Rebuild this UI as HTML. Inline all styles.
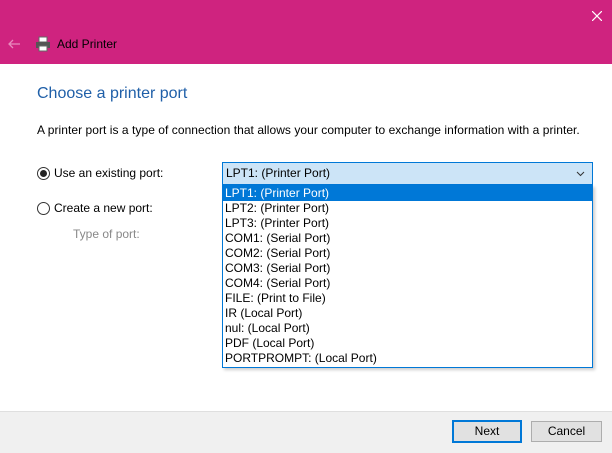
<!DOCTYPE html>
<html><head><style>
body{margin:0;width:612px;height:452px;overflow:hidden;background:#fff;font-family:"Liberation Sans",sans-serif;font-size:12px;color:#000;position:relative}
.a{position:absolute;white-space:nowrap}
.hdr{position:absolute;left:0;top:0;width:612px;height:64px;background:#cf237f}
.radio{position:absolute;width:11px;height:11px;border:1px solid #333;border-radius:50%;background:#fff}
.item{height:15px;line-height:15px;padding-left:2px}
.btn{position:absolute;top:421px;height:19px;line-height:19px;text-align:center;background:#e1e1e1;border:1px solid #adadad;font-size:12px}
</style></head><body>
<div class="hdr"></div>
<svg class="a" style="left:592px;top:11px" width="10" height="10"><path d="M0 0L10 10M10 0L0 10" stroke="#fff" stroke-width="1.2"/></svg>
<svg class="a" style="left:7px;top:38px" width="14" height="12"><path d="M13 6H2M6 2L2 6l4 4" stroke="#e88bbd" stroke-width="1.3" fill="none"/></svg>
<svg class="a" style="left:35px;top:36px" width="16" height="16"><rect x="4" y="1" width="8" height="5" fill="#fff" stroke="#666"/><rect x="1" y="6" width="14" height="6" fill="#555"/><rect x="4" y="10" width="8" height="5" fill="#fff" stroke="#666"/></svg>
<div class="a" style="left:57px;top:37px;font-size:12px">Add Printer</div>
<div class="a" style="left:37px;top:85px;font-size:16px;color:#1f5fa8">Choose a printer port</div>
<div class="a" style="left:37px;top:123px;letter-spacing:0.05px">A printer port is a type of connection that allows your computer to exchange information with a printer.</div>
<div class="radio" style="left:37px;top:167px"><div style="position:absolute;left:2px;top:2px;width:7px;height:7px;border-radius:50%;background:#222"></div></div>
<div class="a" style="left:54px;top:166px">Use an existing port:</div>
<div class="radio" style="left:37px;top:202px"></div>
<div class="a" style="left:54px;top:201px">Create a new port:</div>
<div class="a" style="left:73px;top:227px;color:#888">Type of port:</div>
<div class="a" style="left:222px;top:162px;width:369px;height:21px;background:#cce4f7;border:1px solid #0078d7;line-height:21px"><span style="padding-left:3px">LPT1: (Printer Port)</span><svg style="position:absolute;right:7px;top:8px" width="9" height="6"><path d="M1 1l3.5 3.5L8 1" stroke="#333" fill="none"/></svg></div>
<div class="a" style="left:222px;top:185px;width:369px;height:181px;border:1px solid #0078d7;background:#fff;box-shadow:2px 2px 3px rgba(0,0,0,.2)">
<div class="item" style="background:#0078d7;color:#fff">LPT1: (Printer Port)</div>
<div class="item">LPT2: (Printer Port)</div>
<div class="item">LPT3: (Printer Port)</div>
<div class="item">COM1: (Serial Port)</div>
<div class="item">COM2: (Serial Port)</div>
<div class="item">COM3: (Serial Port)</div>
<div class="item">COM4: (Serial Port)</div>
<div class="item">FILE: (Print to File)</div>
<div class="item">IR (Local Port)</div>
<div class="item">nul: (Local Port)</div>
<div class="item">PDF (Local Port)</div>
<div class="item">PORTPROMPT: (Local Port)</div>
</div>
<div class="a" style="left:0;top:411px;width:612px;height:41px;background:#f0f0f0;border-top:1px solid #dfdfdf"></div>
<div class="btn" style="left:452px;width:66px;border:2px solid #0078d7;top:420px">Next</div>
<div class="btn" style="left:531px;width:69px">Cancel</div>
</body></html>
